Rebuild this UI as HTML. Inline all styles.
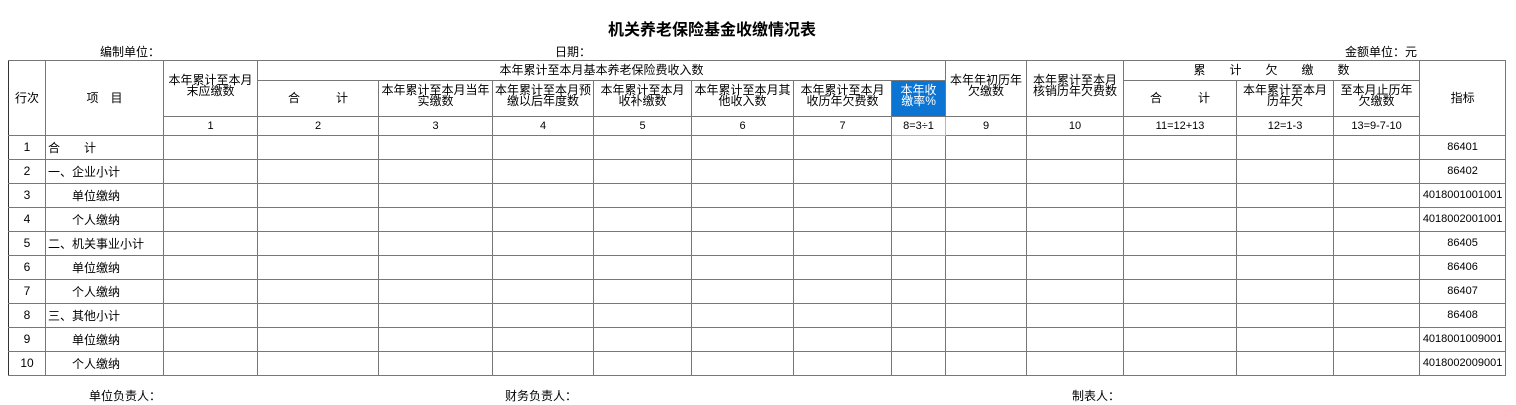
<!DOCTYPE html>
<html><head><meta charset="utf-8"><style>
body{margin:0;width:1516px;height:405px;background:#fff;position:relative;overflow:hidden;font-family:"Liberation Sans","Noto Sans CJK SC",sans-serif;font-size:12px;color:#000}
.a{position:absolute;white-space:nowrap}
table{position:absolute;left:8px;top:60px;border-collapse:collapse;table-layout:fixed;width:1498px}
td{border:1px solid #777;padding:0;text-align:center;vertical-align:middle;line-height:11px;overflow:hidden;white-space:nowrap}
td.t{vertical-align:top;padding-top:4px}
td.l{text-align:left;padding-left:2px;line-height:14px}
td.i{padding-left:26px}
td.r{font-size:11px}
.blue{background:#0c74d2;color:#fff}
tr.h3 td{font-size:11px}
tr.d td{height:23px}
</style></head><body>
<div class="a" style="left:0;width:1424px;text-align:center;top:16px;font-size:16px;font-weight:bold">机关养老保险基金收缴情况表</div>
<div class="a" style="left:100px;top:43px">编制单位：</div>
<div class="a" style="left:555px;top:43px">日期：</div>
<div class="a" style="left:1345px;top:43px">金额单位：元</div>
<table>
<colgroup><col style="width:37px"><col style="width:118px"><col style="width:94px"><col style="width:121px"><col style="width:114px"><col style="width:101px"><col style="width:98px"><col style="width:102px"><col style="width:98px"><col style="width:54px"><col style="width:81px"><col style="width:97px"><col style="width:113px"><col style="width:97px"><col style="width:86px"><col style="width:86px"></colgroup>
<tr style="height:20px"><td rowspan="3" style="border-left:1px solid #333">行次</td><td rowspan="3">项　目</td><td rowspan="2" class="t" style="padding-top:14px">本年累计至本月<br>末应缴数</td><td colspan="7">本年累计至本月基本养老保险费收入数</td><td rowspan="2" class="t" style="padding-top:14px">本年年初历年<br>欠缴数</td><td rowspan="2" class="t" style="padding-top:14px">本年累计至本月<br>核销历年欠费数</td><td colspan="3">累　　计　　欠　　缴　　数</td><td rowspan="3">指标</td></tr>
<tr style="height:36px"><td>合　　　计</td><td class="t">本年累计至本月当年<br>实缴数</td><td class="t">本年累计至本月预<br>缴以后年度数</td><td class="t">本年累计至本月<br>收补缴数</td><td class="t">本年累计至本月其<br>他收入数</td><td class="t">本年累计至本月<br>收历年欠费数</td><td class="t blue">本年收<br>缴率%</td><td>合　　　计</td><td class="t">本年累计至本月<br>历年欠</td><td class="t">至本月止历年<br>欠缴数</td></tr>
<tr class="h3" style="height:19px"><td>1</td><td>2</td><td>3</td><td>4</td><td>5</td><td>6</td><td>7</td><td style="border:1px solid #aab8e0">8=3÷1</td><td>9</td><td>10</td><td>11=12+13</td><td>12=1-3</td><td>13=9-7-10</td></tr>
<tr class="d"><td style="border-left:1px solid #333">1</td><td class="l">合　　计</td><td></td><td></td><td></td><td></td><td></td><td></td><td></td><td></td><td></td><td></td><td></td><td></td><td></td><td class="r">86401</td></tr>
<tr class="d"><td style="border-left:1px solid #333">2</td><td class="l">一、企业小计</td><td></td><td></td><td></td><td></td><td></td><td></td><td></td><td></td><td></td><td></td><td></td><td></td><td></td><td class="r">86402</td></tr>
<tr class="d"><td style="border-left:1px solid #333">3</td><td class="l i">单位缴纳</td><td></td><td></td><td></td><td></td><td></td><td></td><td></td><td></td><td></td><td></td><td></td><td></td><td></td><td class="r">4018001001001</td></tr>
<tr class="d"><td style="border-left:1px solid #333">4</td><td class="l i">个人缴纳</td><td></td><td></td><td></td><td></td><td></td><td></td><td></td><td></td><td></td><td></td><td></td><td></td><td></td><td class="r">4018002001001</td></tr>
<tr class="d"><td style="border-left:1px solid #333">5</td><td class="l">二、机关事业小计</td><td></td><td></td><td></td><td></td><td></td><td></td><td></td><td></td><td></td><td></td><td></td><td></td><td></td><td class="r">86405</td></tr>
<tr class="d"><td style="border-left:1px solid #333">6</td><td class="l i">单位缴纳</td><td></td><td></td><td></td><td></td><td></td><td></td><td></td><td></td><td></td><td></td><td></td><td></td><td></td><td class="r">86406</td></tr>
<tr class="d"><td style="border-left:1px solid #333">7</td><td class="l i">个人缴纳</td><td></td><td></td><td></td><td></td><td></td><td></td><td></td><td></td><td></td><td></td><td></td><td></td><td></td><td class="r">86407</td></tr>
<tr class="d"><td style="border-left:1px solid #333">8</td><td class="l">三、其他小计</td><td></td><td></td><td></td><td></td><td></td><td></td><td></td><td></td><td></td><td></td><td></td><td></td><td></td><td class="r">86408</td></tr>
<tr class="d"><td style="border-left:1px solid #333">9</td><td class="l i">单位缴纳</td><td></td><td></td><td></td><td></td><td></td><td></td><td></td><td></td><td></td><td></td><td></td><td></td><td></td><td class="r">4018001009001</td></tr>
<tr class="d"><td style="border-left:1px solid #333">10</td><td class="l i">个人缴纳</td><td></td><td></td><td></td><td></td><td></td><td></td><td></td><td></td><td></td><td></td><td></td><td></td><td></td><td class="r">4018002009001</td></tr>
</table>
<div class="a" style="left:89px;top:387px">单位负责人：</div>
<div class="a" style="left:505px;top:387px">财务负责人：</div>
<div class="a" style="left:1072px;top:387px">制表人：</div>
</body></html>
